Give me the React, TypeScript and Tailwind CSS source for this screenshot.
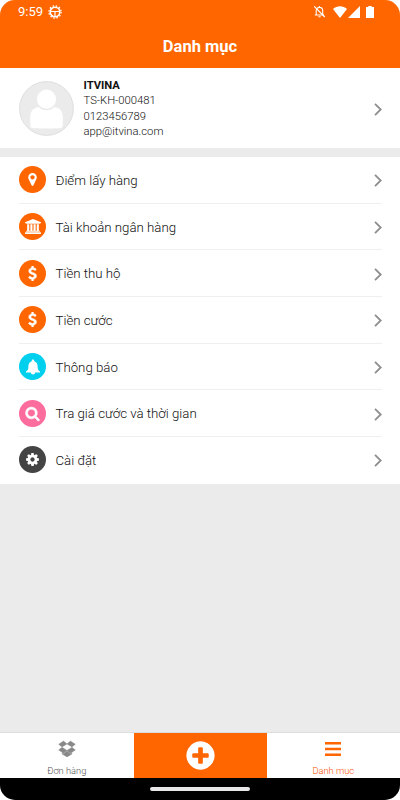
import type { ReactNode } from 'react';

type IconProps = { d: string; viewBox?: string; className?: string };

function Glyph({ d, viewBox = '0 0 1792 1792', className = '' }: IconProps) {
  return (
    <svg viewBox={viewBox} fill="currentColor" className={className}>
      <path d={d} />
    </svg>
  );
}

const MARKER =
  'M1152 640q0-106-75-181t-181-75-181 75-75 181 75 181 181 75 181-75 75-181zm256 0q0 109-33 179l-364 774q-16 33-47.5 52t-67.5 19-67.5-19-46.5-52l-365-774q-33-70-33-179 0-212 150-362t362-150 362 150 150 362z';
const BANK =
  'M960 0l960 384v128h-128q0 26-20.5 45t-48.5 19h-1526q-28 0-48.5-19t-20.5-45h-128v-128zm-704 640h256v768h128v-768h256v768h128v-768h256v768h128v-768h256v768h59q28 0 48.5 19t20.5 45v64h-1664v-64q0-26 20.5-45t48.5-19h59v-768zm1595 960q28 0 48.5 19t20.5 45v128h-1920v-128q0-26 20.5-45t48.5-19h1782z';
const DOLLAR =
  'M1362 1185q0 153-99.5 263.5t-258.5 136.5v175q0 14-9 23t-23 9h-135q-13 0-22.5-9.5t-9.5-22.5v-175q-66-9-127.5-31t-101.5-44.5-74-48-46.5-37.5-17.5-18q-17-21-2-41l103-135q7-10 23-12 15-2 24 9l2 2q113 99 243 125 37 8 74 8 81 0 142.5-43t61.5-122q0-28-15-53t-33.5-42-58.5-37.5-66-32-80-32.5q-39-16-61.5-25t-61.5-26.5-62.5-31-56.5-35.5-53.5-42.5-43.5-49-35.5-58-21-66.5-8.5-78q0-138 98-242t255-134v-180q0-13 9.5-22.5t22.5-9.5h135q14 0 23 9t9 23v176q57 6 110.5 23t87 33.5 63.5 37.5 39 29 15 14q17 18 5 38l-81 146q-8 15-23 16-14 3-27-7-3-3-14.5-12t-39-26.5-58.5-32-74.5-26-85.5-11.5q-95 0-155 43t-60 111q0 26 8.5 48t29.5 41.5 39.5 33 56 31 60.5 27 70 27.5q53 20 81 31.5t76 35 75.5 42.5 62 50 53 63.5 31.5 76.5 13 94z';
const SEARCH =
  'M1216 832q0-185-131.5-316.5t-316.5-131.5-316.5 131.5-131.5 316.5 131.5 316.5 316.5 131.5 316.5-131.5 131.5-316.5zm512 832q0 52-38 90t-90 38q-54 0-90-38l-343-342q-179 124-399 124-143 0-273.5-55.5t-225-150-150-225-55.5-273.5 55.5-273.5 150-225 225-150 273.5-55.5 273.5 55.5 225 150 150 225 55.5 273.5q0 220-124 399l343 343q37 37 37 90z';
const GEAR =
  'M1152 896q0-106-75-181t-181-75-181 75-75 181 75 181 181 75 181-75 75-181zm512-109v222q0 12-8 23t-20 13l-185 28q-19 54-39 91 35 50 107 138 10 12 10 25t-9 23q-27 37-99 108t-94 71q-12 0-26-9l-138-108q-44 23-91 38-16 136-29 186-7 28-36 28h-222q-14 0-24.5-8.5t-11.5-21.5l-28-184q-49-16-90-37l-141 107q-10 9-25 9-14 0-25-11-126-114-165-168-7-10-7-23 0-12 8-23 15-21 51-66.5t54-70.5q-27-50-41-99l-183-27q-13-2-21-12.5t-8-23.5v-222q0-12 8-23t19-13l186-28q14-46 39-92-40-57-107-138-10-12-10-24 0-10 9-23 26-36 98.5-107.5t94.5-71.5q13 0 26 10l138 107q44-23 91-38 16-136 29-186 7-28 36-28h222q14 0 24.5 8.5t11.5 21.5l28 184q49 16 90 37l142-107q9-9 24-9 13 0 25 10 129 119 165 170 7 8 7 22 0 12-8 23-15 21-51 66.5t-54 70.5q26 50 41 98l183 28q13 2 21 12.5t8 23.5z';
const BELL =
  'M8 0.6C8.7 0.6 9.2 1.1 9.2 1.8V2.3C11.4 2.9 12.6 4.8 12.6 7.2C12.6 10 13 11 15 12.6V13.6H10.2C10 14.8 9.2 15.6 8 15.6S6 14.8 5.8 13.6H1V12.6C3 11 3.4 10 3.4 7.2C3.4 4.8 4.6 2.9 6.8 2.3V1.8C6.8 1.1 7.3 0.6 8 0.6Z';
const DROPBOX =
  'M402 829l494 305-342 285-490-319zM1388 1384v108l-490 293v1l-1-1-1 1v-1l-489-293v-108l147 96 342-284v-2l1 1 1-1v2l343 284zM554 206l342 285-494 304-338-270zM1390 829l338 271-489 319-343-285zM1239 206l489 319-338 270-494-304z';
const PLUS_CIRCLE =
  'M1344 960v-128q0-26-19-45t-45-19h-256v-256q0-26-19-45t-45-19h-128q-26 0-45 19t-19 45v256h-256q-26 0-45 19t-19 45v128q0 26 19 45t45 19h256v256q0 26 19 45t45 19h128q26 0 45-19t19-45v-256h256q26 0 45-19t19-45zm320-64q0 209-103 385.5t-279.5 279.5-385.5 103-385.5-103-279.5-279.5-103-385.5 103-385.5 279.5-279.5 385.5-103 385.5 103 279.5 279.5 103 385.5z';

function Chevron() {
  return (
    <svg viewBox="0 0 8 13" className="h-[13px] w-2 shrink-0" fill="none" stroke="#8e8e8e" strokeWidth="1.8">
      <path d="M1 .8 6.7 6.5 1 12.2" />
    </svg>
  );
}

const items: { label: string; color: string; icon: ReactNode }[] = [
  { label: 'Điểm lấy hàng', color: 'bg-[#ff6600]', icon: <Glyph d={MARKER} className="size-[15px]" /> },
  {
    label: 'Tài khoản ngân hàng',
    color: 'bg-[#ff6600]',
    icon: <Glyph d={BANK} viewBox="0 0 1920 1792" className="h-[15px] w-4" />,
  },
  {
    label: 'Tiền thu hộ',
    color: 'bg-[#ff6600]',
    icon: <Glyph d={DOLLAR} className="size-[15px] stroke-current stroke-[70]" />,
  },
  {
    label: 'Tiền cước',
    color: 'bg-[#ff6600]',
    icon: <Glyph d={DOLLAR} className="size-[15px] stroke-current stroke-[70]" />,
  },
  { label: 'Thông báo', color: 'bg-[#00cfee]', icon: <Glyph d={BELL} viewBox="0 0 16 16" className="size-4" /> },
  {
    label: 'Tra giá cước và thời gian',
    color: 'bg-[#fc6c9c]',
    icon: <Glyph d={SEARCH} className="size-[15px] overflow-visible stroke-current stroke-[60]" />,
  },
  { label: 'Cài đặt', color: 'bg-[#444444]', icon: <Glyph d={GEAR} className="size-[15px]" /> },
];

function StatusBar() {
  return (
    <div className="flex h-[23px] items-center pr-[26px] pl-[18px] text-white">
      <span className="text-[13px] leading-6">9:59</span>
      <svg viewBox="0 0 14 14" className="ml-[5px] size-[14px]" fill="none" stroke="currentColor">
        <circle cx="7" cy="7" r="4.8" strokeWidth="1.6" />
        <circle cx="7" cy="7" r="6.1" strokeWidth="1.3" strokeDasharray="1.5 1.69" />
        <path d="M2.5 6.5h9M7 6.5v5" strokeWidth="1.2" />
      </svg>
      <svg viewBox="0 0 13 13" className="ml-auto size-[13px]" fill="none" stroke="currentColor">
        <path d="M3.2 10V5.8C3.2 3.8 4.5 2.4 6.4 2.4S9.7 3.8 9.7 5.8V10M1.8 10h9.3M6.4 2.4V.9M5.3 11.7h2.3" strokeWidth="1.1" />
        <path d="M1.2 1.4 11.8 12" strokeWidth="1.2" />
      </svg>
      <svg viewBox="0 0 14 12" className="ml-[7px] h-3 w-[14px]" fill="currentColor">
        <path d="M0 3C4-.8 10-.8 14 3L7 12Z" />
      </svg>
      <svg viewBox="0 0 12 12" className="ml-px size-3" fill="currentColor">
        <path d="M12 0v12H0Z" />
      </svg>
      <svg viewBox="0 0 8 12" className="ml-[6px] h-3 w-2" fill="currentColor">
        <path d="M2.3 0h3.4v1H8v11H0V1h2.3Z" />
      </svg>
    </div>
  );
}

export default function App() {
  return (
    <div className="h-[800px] w-[400px] bg-white font-[Roboto,sans-serif]">
      <div className="flex h-full flex-col overflow-hidden rounded-[15px] bg-[#ebebeb]">
        <header className="h-[68px] shrink-0 bg-[#ff6600]">
          <StatusBar />
          <h1 className="text-center text-[16.5px] leading-[47px] font-bold text-white">Danh mục</h1>
        </header>

        <section className="flex h-20 shrink-0 items-center bg-white pr-[18px] pl-[19px]">
          <svg viewBox="0 0 56 56" className="size-[55px] shrink-0">
            <circle cx="28" cy="28" r="27.4" fill="#ebebeb" stroke="#dddddd" />
            <rect x="11.5" y="26.5" width="33" height="21.5" rx="9" fill="white" />
            <path d="M11.5 38h33v7a3 3 0 0 1-3 3h-27a3 3 0 0 1-3-3Z" fill="white" />
            <circle cx="28" cy="18.5" r="10.5" fill="white" stroke="#ebebeb" strokeWidth="1.5" />
          </svg>
          <div className="mt-px ml-[9.5px] flex-1 text-[11.25px] leading-[15.3px] font-light text-[#111111]">
            <p className="font-bold">ITVINA</p>
            <p>TS-KH-000481</p>
            <p>0123456789</p>
            <p>app@itvina.com</p>
          </div>
          <div className="mt-[2px]">
            <Chevron />
          </div>
        </section>

        <ul className="mt-[9px] shrink-0 bg-white pl-[19px]">
          {items.map((item) => (
            <li
              key={item.label}
              className="mr-[18px] flex h-[46.7px] items-center border-b border-[#efefef] last:border-white"
            >
              <span className={`flex size-[27px] items-center justify-center rounded-full text-white ${item.color}`}>
                {item.icon}
              </span>
              <span className="mt-[2px] ml-[9.5px] flex-1 text-[13.25px] font-light text-[#111111]">{item.label}</span>
              <div className="mt-[2px]">
                <Chevron />
              </div>
            </li>
          ))}
        </ul>

        <div className="flex-1" />

        <nav className="flex h-[46px] shrink-0 border-t border-[#dddddd] bg-white">
          <div className="flex flex-1 flex-col items-center pt-[6px] text-[#888888]">
            <Glyph d={DROPBOX} className="size-[18px] stroke-current stroke-[40]" />
            <span className="mt-2 text-[9.3px] leading-3 font-light text-[#555555]">Đơn hàng</span>
          </div>
          <div className="flex w-[133px] items-center justify-center bg-[#ff6600] text-white">
            <Glyph d={PLUS_CIRCLE} className="size-[33px]" />
          </div>
          <div className="flex flex-1 flex-col items-center pt-[9px] text-[#ff6600]">
            <svg viewBox="0 0 16 14" className="h-[14px] w-4" fill="currentColor">
              <path d="M0 0h16v2.6H0zM0 5.7h16v2.6H0zM0 11.4h16V14H0z" />
            </svg>
            <span className="mt-[9px] text-[9.3px] leading-3 font-light text-[#ff4d00]">Danh mục</span>
          </div>
        </nav>
        <div className="flex h-[22px] shrink-0 justify-center bg-black pt-[9px]">
          <div className="h-1 w-[100px] rounded-full bg-[#e8e8e8]" />
        </div>
      </div>
    </div>
  );
}
